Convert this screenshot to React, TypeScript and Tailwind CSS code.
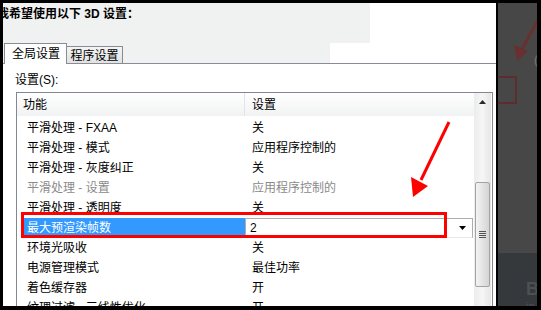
import React from 'react';

const rows = [
  { name: '平滑处理 - FXAA', value: '关' },
  { name: '平滑处理 - 模式', value: '应用程序控制的' },
  { name: '平滑处理 - 灰度纠正', value: '关' },
  { name: '平滑处理 - 设置', value: '应用程序控制的', disabled: true },
  { name: '平滑处理 - 透明度', value: '关' },
  { name: '最大预渲染帧数', value: '2', selected: true },
  { name: '环境光吸收', value: '关' },
  { name: '电源管理模式', value: '最佳功率' },
  { name: '着色缓存器', value: '开' },
  { name: '纹理过滤 - 三线性优化', value: '开' },
];

const font = "font-['Liberation_Sans','Noto_Sans_CJK_SC',sans-serif]";

const App = () => {
  return (
    <div className={`relative flex h-[310px] w-[541px] overflow-hidden bg-black pl-[3px] pt-[3px] text-[12px] leading-[14px] text-black ${font}`}>
      {/* Main panel */}
      <div className="h-[303px] w-[493px] shrink-0 overflow-hidden bg-white">
        {/* Title */}
        <div className="h-[40px] bg-[linear-gradient(to_right,#f0f1f1_367px,#ffffff_367px)] pt-[4px]">
          <div className="ml-[-6px] whitespace-nowrap font-bold">我希望使用以下 3D 设置：</div>
        </div>

        {/* Tabs */}
        <div className="flex h-[21px] items-end border-b border-[#898c95] bg-[linear-gradient(to_right,#f0f1f1_327px,#ffffff_327px)]">
          <div className="relative z-10 mb-[-1px] ml-[1px] flex h-[21px] w-[63px] items-center justify-center border-x border-t border-[#898c95] bg-white pl-[1px]">
            全局设置
          </div>
          <div className="flex h-[17px] w-[56px] items-center justify-center border-r border-t border-[#898c95] bg-[linear-gradient(#f4f4f4,#e2e2e2)] pt-[1px]">
            程序设置
          </div>
        </div>

        {/* Body */}
        <div className="ml-[12px] mt-[9px] h-[14px]">设置(S):</div>
        <div className="ml-[13px] mt-[5px] flex h-[230px] w-[477px] overflow-hidden border border-b-0 border-[#828790]">
          <div className="w-[457px] shrink-0">
            {/* Header */}
            <div className="flex h-[23px] items-center bg-[linear-gradient(#ffffff,#f1f2f3)]">
              <div className="flex h-full w-[228px] items-center border-r border-[#e2e3e5] pl-[6px]">功能</div>
              <div className="pl-[7px]">设置</div>
            </div>
            <div className="mt-[2px]">
              {rows.map((r) =>
                r.selected ? (
                  <div key={r.name} className="flex h-[20px] items-stretch">
                    <div className="ml-[5px] flex w-[223px] items-center bg-[#3399ff] pl-[5px] text-white">{r.name}</div>
                    <div className="flex w-[228px] items-center justify-between border border-[#abadb3] border-b-[#e3e9ef] bg-white pl-[4px] pr-[5px]">
                      <span>{r.value}</span>
                      <svg width="8" height="5" viewBox="0 0 8 5">
                        <path d="M0 0h7L3.5 4z" fill="#000" />
                      </svg>
                    </div>
                  </div>
                ) : (
                  <div
                    key={r.name}
                    className={`flex h-[20px] items-center whitespace-nowrap ${r.disabled ? 'text-[#8a8a8a]' : ''}`}
                  >
                    <div className="w-[228px] pl-[10px]">{r.name}</div>
                    <div className="pl-[7px]">{r.value}</div>
                  </div>
                )
              )}
            </div>
          </div>

          {/* Scrollbar */}
          <div className="flex w-[17px] shrink-0 flex-col items-center bg-[linear-gradient(to_right,#ececec,#f6f6f6,#e6e6e6)]">
            <div className="flex h-[17px] w-full shrink-0 items-center justify-center">
              <svg width="7" height="4" viewBox="0 0 7 4">
                <path d="M3.5 0L7 4H0z" fill="#2a2a2a" />
              </svg>
            </div>
            <div className="mt-[72px] flex h-[105px] w-[15px] shrink-0 items-center justify-center rounded-[2px] border border-[#a3a3a3] bg-[linear-gradient(to_right,#f4f4f4,#e4e4e4,#d4d4d4)]">
              <div className="flex flex-col gap-[1px]">
                <div className="h-[1px] w-[7px] bg-[#555]" />
                <div className="h-[1px] w-[7px] bg-[#555]" />
                <div className="h-[1px] w-[7px] bg-[#555]" />
                <div className="h-[1px] w-[7px] bg-[#555]" />
              </div>
            </div>
          </div>
        </div>
      </div>

      {/* Dark desktop panel on the right */}
      <div className="relative ml-[2px] flex h-[303px] w-[39px] shrink-0 flex-col overflow-hidden">
        <div className="h-[250px] shrink-0 bg-[#474747]" />
        <div className="flex-1 bg-[#35393c]" />
        <svg className="absolute left-0 top-0" width="39" height="120" viewBox="0 0 39 120">
          <line x1="44" y1="10" x2="24" y2="46" stroke="#6a2f2f" strokeWidth="3" />
          <polygon points="19,58 16,42 30,48" fill="#6a2f2f" />
          <rect x="-3" y="74" width="21" height="26" fill="none" stroke="#5e2c2c" strokeWidth="2" />
        </svg>
        <span className="absolute left-[36px] top-[50px] text-[12px] text-[#777]">(</span>
        <span className="absolute left-[28px] top-[275px] text-[18px] font-bold leading-[22px] text-[#4c5055]">B</span>
        <span className="absolute left-[28px] top-[296px] text-[11px] text-[#4c5055]">in</span>
      </div>

      {/* Annotation overlay: red box and arrow */}
      <div className="absolute left-[21px] top-[212px] h-[26px] w-[426px] border-[3px] border-[#ff0000]" />
      <svg className="absolute left-0 top-0" width="541" height="310" viewBox="0 0 541 310">
        <line x1="449" y1="122" x2="421" y2="180" stroke="#ff0000" strokeWidth="3" />
        <polygon points="413,197 411,177 428,186" fill="#ff0000" />
      </svg>
    </div>
  );
};

export default App;
